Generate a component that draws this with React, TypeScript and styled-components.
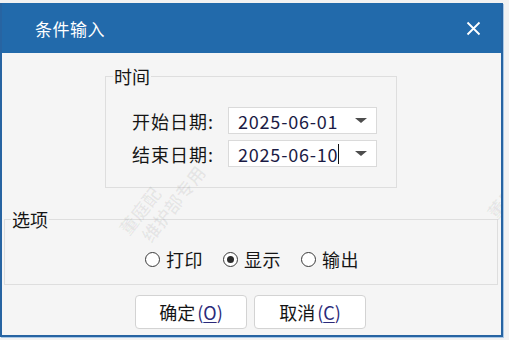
import React from "react";
import styled, { createGlobalStyle } from "styled-components";

const GlobalStyle = createGlobalStyle`
  html, body { margin: 0; padding: 0; background: #f2f2f2; }
  body { font-family: "Noto Sans CJK SC", "Microsoft YaHei", sans-serif; }
  * { box-sizing: border-box; }
`;

const Page = styled.div`
  width: 509px;
  height: 340px;
  padding-top: 3px;
  overflow: hidden;
  position: relative;
`;

const Dialog = styled.div`
  width: 503px;
  border: 2px solid #2764a2;
  border-top: none;
  box-shadow: 1px 1px 0 #a9c8e6;
  background: #f5f5f5;
  position: relative;
  overflow: hidden;
`;

const TitleBar = styled.div`
  height: 50px;
  margin: 0 -2px;
  background: #226aab;
  display: flex;
  align-items: center;
  justify-content: space-between;
  padding: 0 22px 0 35px;
  color: #ffffff;
  font-size: 17px;
  letter-spacing: 0.5px;
`;

const CloseButton = styled.div`
  width: 16px;
  height: 16px;
  display: flex;
  align-items: center;
  justify-content: center;
`;

const Body = styled.div`
  padding: 14px 3px 6px 0;
  display: flex;
  flex-direction: column;
  font-size: 18px;
  color: #151515;
`;

const Group = styled.fieldset<{ $left: number; $width: number; $pt: number; $pb: number; $mt?: number }>`
  margin: ${(p) => p.$mt ?? 0}px 0 0 ${(p) => p.$left}px;
  width: ${(p) => p.$width}px;
  border: 1px solid #dedede;
  padding: ${(p) => p.$pt}px 0 ${(p) => p.$pb}px 0;
  min-width: 0;
`;

const Legend = styled.legend<{ $ml: number }>`
  margin-left: ${(p) => p.$ml}px;
  padding: 0 1px;
  font-size: 18px;
  line-height: 18px;
  color: #151515;
`;

const Rows = styled.div`
  display: flex;
  flex-direction: column;
  gap: 6px;
  padding-left: 26px;
`;

const Row = styled.div`
  display: flex;
  align-items: center;
  height: 27px;
`;

const Label = styled.span`
  width: 96px;
  font-size: 18px;
  line-height: 1;
  color: #151515;
  letter-spacing: 1px;
`;

const Combo = styled.div`
  width: 149px;
  height: 27px;
  background: #ffffff;
  border: 1px solid #dadada;
  display: flex;
  align-items: center;
  padding-left: 9px;
  padding-right: 8px;
  font-size: 18px;
  line-height: 1;
  letter-spacing: 0.8px;
  color: #1b1b45;
`;

const ComboText = styled.span`
  flex: 1;
  display: flex;
  align-items: center;
`;

const Caret = styled.span`
  display: inline-block;
  width: 1px;
  height: 20px;
  background: #111;
  margin-left: 0;
`;

const Arrow = styled.span`
  width: 0;
  height: 0;
  border-left: 6px solid transparent;
  border-right: 6px solid transparent;
  border-top: 5px solid #4d4d4d;
  margin-right: 1px;
`;

const RadioRow = styled.div`
  display: flex;
  justify-content: center;
  align-items: center;
  gap: 20px;
  height: 18px;
  padding-left: 2px;
`;

const RadioItem = styled.label`
  display: flex;
  align-items: center;
  gap: 6px;
  font-size: 18px;
  line-height: 1;
  color: #151515;
  letter-spacing: 0.5px;
`;

const RadioCircle = styled.span<{ $checked?: boolean }>`
  width: 15px;
  height: 15px;
  border-radius: 50%;
  border: 1px solid #3a3a3a;
  background: #fff;
  display: flex;
  align-items: center;
  justify-content: center;
  &::after {
    content: "";
    width: 7px;
    height: 7px;
    border-radius: 50%;
    background: ${(p) => (p.$checked ? "#2b2b2b" : "transparent")};
  }
`;

const Buttons = styled.div`
  display: flex;
  justify-content: center;
  gap: 7px;
  margin-top: 10px;
  padding-left: 1px;
`;

const Button = styled.button`
  width: 112px;
  height: 34px;
  background: #ffffff;
  border: 1px solid #d3d3d3;
  border-radius: 4px;
  font-family: "Noto Sans CJK SC", "Microsoft YaHei", sans-serif;
  font-size: 18px;
  line-height: 1;
  color: #151515;
  display: flex;
  align-items: center;
  justify-content: center;
  padding: 0;
`;

const Mnemonic = styled.span`
  color: #2a2a7a;
  margin-left: 2px;
  u { text-underline-offset: 2px; }
`;

const Watermark = styled.div<{ $x: number; $y: number }>`
  position: absolute;
  left: ${(p) => p.$x}px;
  top: ${(p) => p.$y}px;
  transform: rotate(-52deg);
  transform-origin: left top;
  color: rgba(0, 0, 0, 0.06);
  font-size: 18px;
  line-height: 22px;
  font-weight: 700;
  pointer-events: none;
  white-space: nowrap;
`;

export default function App() {
  return (
    <>
      <GlobalStyle />
      <Page>
        <Dialog>
          <TitleBar>
            <span>条件输入</span>
            <CloseButton>
              <svg width="15" height="15" viewBox="0 0 15 15">
                <path d="M1.5 1.5 L13.5 13.5 M13.5 1.5 L1.5 13.5" stroke="#fff" strokeWidth="1.8" />
              </svg>
            </CloseButton>
          </TitleBar>
          <Body>
            <Group $left={103} $width={292} $pt={22} $pb={20}>
              <Legend $ml={7}>时间</Legend>
              <Rows>
                <Row>
                  <Label>开始日期:</Label>
                  <Combo>
                    <ComboText>2025-06-01</ComboText>
                    <Arrow />
                  </Combo>
                </Row>
                <Row>
                  <Label>结束日期:</Label>
                  <Combo>
                    <ComboText>
                      2025-06-10
                      <Caret />
                    </ComboText>
                    <Arrow />
                  </Combo>
                </Row>
              </Rows>
            </Group>
            <Group $left={2} $width={494} $pt={22} $pb={16} $mt={22}>
              <Legend $ml={6}>选项</Legend>
              <RadioRow>
                <RadioItem>
                  <RadioCircle />
                  打印
                </RadioItem>
                <RadioItem>
                  <RadioCircle $checked />
                  显示
                </RadioItem>
                <RadioItem>
                  <RadioCircle />
                  输出
                </RadioItem>
              </RadioRow>
            </Group>
            <Buttons>
              <Button>
                确定<Mnemonic>(<u>O</u>)</Mnemonic>
              </Button>
              <Button>
                取消<Mnemonic>(<u>C</u>)</Mnemonic>
              </Button>
            </Buttons>
          </Body>
          <Watermark $x={112} $y={222}>
            董庭配
            <br />
            &nbsp;&nbsp;维护部专用
          </Watermark>
          <Watermark $x={480} $y={206}>
            董庭配
          </Watermark>
        </Dialog>
      </Page>
    </>
  );
}
